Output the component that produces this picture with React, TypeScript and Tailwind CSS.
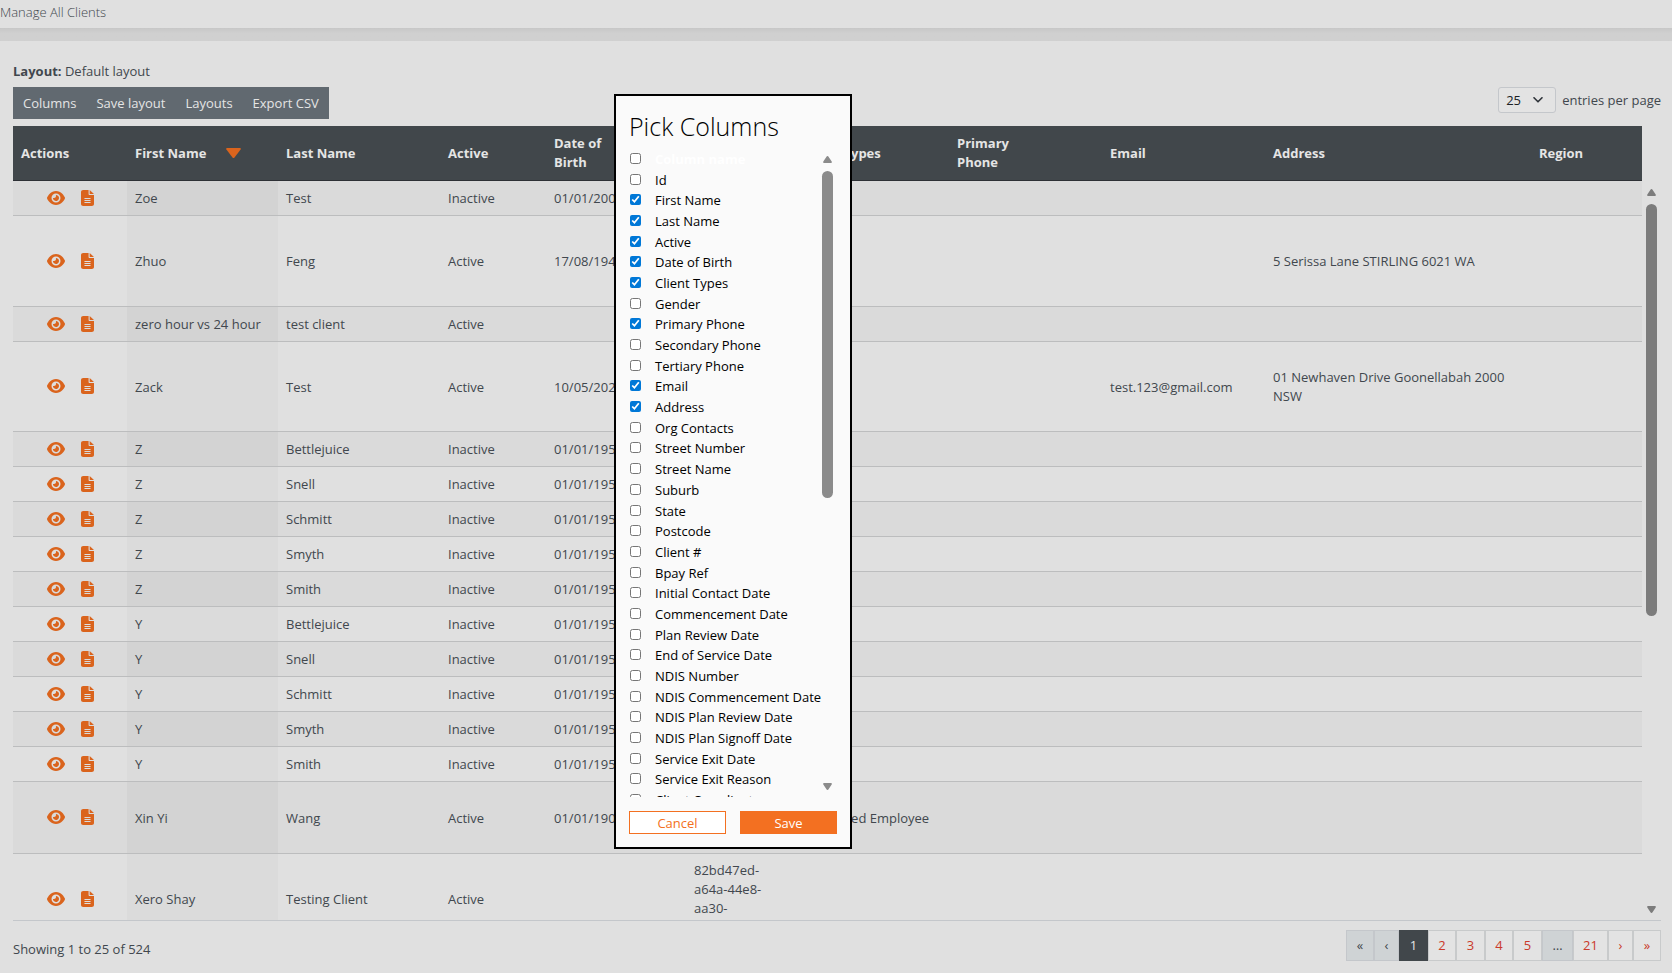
import { FaEye, FaFileLines } from "react-icons/fa6";

const headers = [
  { label: "Actions", width: "w-[114px]" },
  { label: "First Name", width: "w-[151px]", sorted: true },
  { label: "Last Name", width: "w-[162px]" },
  { label: "Active", width: "w-[106px]" },
  { label: "Date of Birth", width: "w-[140px]" },
  { label: "", width: "w-[108px]" },
  { label: "Client Types", width: "w-[155px]" },
  { label: "Primary Phone", width: "w-[153px]" },
  { label: "Email", width: "w-[163px]" },
  { label: "Address", width: "w-[266px]" },
  { label: "Region", width: "" },
];

type Client = {
  first: string;
  last: string;
  active: string;
  dob?: string;
  ref?: string;
  types?: string;
  email?: string;
  address?: string;
  height?: string;
};

const clients: Client[] = [
  { first: "Zoe", last: "Test", active: "Inactive", dob: "01/01/2000" },
  { first: "Zhuo", last: "Feng", active: "Active", dob: "17/08/1949", address: "5 Serissa Lane STIRLING 6021 WA", height: "h-[91px]" },
  { first: "zero hour vs 24 hour", last: "test client", active: "Active" },
  { first: "Zack", last: "Test", active: "Active", dob: "10/05/2020", email: "test.123@gmail.com", address: "01 Newhaven Drive Goonellabah 2000 NSW", height: "h-[90px]" },
  { first: "Z", last: "Bettlejuice", active: "Inactive", dob: "01/01/1950" },
  { first: "Z", last: "Snell", active: "Inactive", dob: "01/01/1950" },
  { first: "Z", last: "Schmitt", active: "Inactive", dob: "01/01/1950" },
  { first: "Z", last: "Smyth", active: "Inactive", dob: "01/01/1950" },
  { first: "Z", last: "Smith", active: "Inactive", dob: "01/01/1950" },
  { first: "Y", last: "Bettlejuice", active: "Inactive", dob: "01/01/1950" },
  { first: "Y", last: "Snell", active: "Inactive", dob: "01/01/1950" },
  { first: "Y", last: "Schmitt", active: "Inactive", dob: "01/01/1950" },
  { first: "Y", last: "Smyth", active: "Inactive", dob: "01/01/1950" },
  { first: "Y", last: "Smith", active: "Inactive", dob: "01/01/1950" },
  { first: "Xin Yi", last: "Wang", active: "Active", dob: "01/01/1900", types: "Registered Employee", height: "h-[72px]" },
  { first: "Xero Shay", last: "Testing Client", active: "Active", ref: "82bd47ed-a64a-44e8-aa30-", height: "h-[91px]" },
];

const columns = [
  "Id", "First Name", "Last Name", "Active", "Date of Birth", "Client Types", "Gender",
  "Primary Phone", "Secondary Phone", "Tertiary Phone", "Email", "Address", "Org Contacts",
  "Street Number", "Street Name", "Suburb", "State", "Postcode", "Client #", "Bpay Ref",
  "Initial Contact Date", "Commencement Date", "Plan Review Date", "End of Service Date",
  "NDIS Number", "NDIS Commencement Date", "NDIS Plan Review Date", "NDIS Plan Signoff Date",
  "Service Exit Date", "Service Exit Reason", "Client Coordinator",
];

const picked = ["First Name", "Last Name", "Active", "Date of Birth", "Client Types", "Primary Phone", "Email", "Address"];

const pages = [
  { label: "«", width: "w-7", state: "off" },
  { label: "‹", width: "w-[25px]", state: "off" },
  { label: "1", width: "w-[29px]", state: "current" },
  { label: "2", width: "w-7", state: "link" },
  { label: "3", width: "w-[29px]", state: "link" },
  { label: "4", width: "w-7", state: "link" },
  { label: "5", width: "w-[29px]", state: "link" },
  { label: "…", width: "w-[31px]", state: "off" },
  { label: "21", width: "w-[35px]", state: "link" },
  { label: "›", width: "w-[25px]", state: "link" },
  { label: "»", width: "w-7", state: "link" },
];

const pageStyles: Record<string, string> = {
  off: "border-[#dbdee2] bg-[#e7ebee] text-[#495057]",
  current: "border-[#495054] bg-[#495054] text-white",
  link: "border-[#dfe1e3] bg-[#fdfdfd] text-[#e2422f]",
};

function Arrow({ down }: { down?: boolean }) {
  return (
    <svg viewBox="0 0 9 7" className={down ? "h-[7px] w-[9px] rotate-180" : "h-[7px] w-[9px]"} fill="#8b8b8b">
      <path d="M4.5 0 Q5.2 0 5.7 .9 L8.7 5.6 Q9.3 7 8 7 H1 Q-.3 7 .3 5.6 L3.3 .9 Q3.8 0 4.5 0Z" />
    </svg>
  );
}

function ScrollBar({ thumb, className }: { thumb: string; className: string }) {
  return (
    <div className={`flex w-[19px] shrink-0 flex-col items-center pt-2 pb-[7px] ${className}`}>
      <Arrow />
      <div className={`mt-2 w-[11px] rounded-full bg-[#8b8b8b] ${thumb}`} />
      <div className="flex-1" />
      <Arrow down />
    </div>
  );
}

function ClientsTable() {
  return (
    <div className="flex min-h-0 flex-1 border-b border-[#dbdee2]">
      <div className="min-w-0 flex-1 overflow-hidden">
        <table className="w-full table-fixed border-collapse text-left">
          <thead>
            <tr className="h-[54px] border-b border-[#33363c] bg-[#495054] text-white">
              {headers.map((h, i) => (
                <th key={i} className={`px-2 pt-px font-bold ${h.width}`}>
                  {h.sorted ? (
                    <span className="flex items-center gap-5">
                      {h.label}
                      <svg viewBox="0 0 15 10" className="h-[10px] w-[15px]" fill="#f37021">
                        <path d="M1.2 0H13.8Q15.4.2 14.6 1.6L8.5 9.4Q7.5 10.4 6.5 9.4L.4 1.6Q-.4.2 1.2 0Z" />
                      </svg>
                    </span>
                  ) : (
                    <span className={h.label.includes("of") || h.label.includes("Phone") ? "block w-16" : ""}>{h.label}</span>
                  )}
                </th>
              ))}
            </tr>
          </thead>
          <tbody>
            {clients.map((c, i) => (
              <tr key={i} className={`border-b border-[#d2d3d4] odd:bg-[#f3f3f3] ${c.height ?? "h-[35px]"}`}>
                <td>
                  <div className="flex items-center gap-4 pl-[34px] text-[#f37021]">
                    <button type="button" aria-label="View client">
                      <FaEye className="h-4 w-[18px]" />
                    </button>
                    <button type="button" aria-label="Client notes">
                      <FaFileLines className="h-4 w-[13px]" preserveAspectRatio="none" />
                    </button>
                  </div>
                </td>
                <td className={i % 2 ? "bg-[#f4f4f4] px-2 pt-[2px]" : "bg-[#ebebeb] px-2 pt-[2px]"}>{c.first}</td>
                <td className="px-2 pt-[2px]">{c.last}</td>
                <td className="px-2 pt-[2px]">{c.active}</td>
                <td className="px-2 pt-[2px]">{c.dob}</td>
                <td className="px-2">
                  {c.ref && <span className="block h-[76px]">{c.ref}</span>}
                </td>
                <td className="px-2 pt-[2px] whitespace-nowrap">{c.types}</td>
                <td></td>
                <td className="px-2 pt-[2px]">{c.email}</td>
                <td className="px-2 pt-[2px]">{c.address}</td>
                <td></td>
              </tr>
            ))}
          </tbody>
        </table>
      </div>
      <ScrollBar className="mt-[55px]" thumb="h-[412px]" />
    </div>
  );
}

function PickColumns() {
  return (
    <div role="dialog" aria-labelledby="pick-title" className="fixed top-[94px] left-[614px] flex w-[238px] flex-col border-2 border-black bg-[#fafafa] p-[13px] text-black">
      <h2 id="pick-title" className="mb-1 h-[35px] text-[25px] leading-[35px] font-light">
        Pick Columns
      </h2>
      <div className="flex h-[649px] overflow-hidden">
        <div className="grid h-[662px] min-w-0 flex-1 auto-rows-fr">
          <label className="flex items-center gap-[14px] font-bold whitespace-nowrap text-white">
            <input type="checkbox" className="ml-px size-[11px]" />
            <span className="pt-[2px]">Column name</span>
          </label>
          {columns.map((name) => (
            <label key={name} className="flex items-center gap-[14px] whitespace-nowrap">
              <input type="checkbox" defaultChecked={picked.includes(name)} className="ml-px size-[11px] accent-[#0078d7]" />
              <span className="pt-[2px]">{name}</span>
            </label>
          ))}
        </div>
        <ScrollBar className="" thumb="h-[327px]" />
      </div>
      <div className="mt-[14px] grid grid-cols-2 gap-[14px]">
        <button type="button" className="h-[23px] border border-[#f37021] bg-white pt-px text-[#f37021]">
          Cancel
        </button>
        <button type="button" className="h-[23px] bg-[#f37021] pt-px text-white">
          Save
        </button>
      </div>
    </div>
  );
}

export default function App() {
  return (
    <div className="flex h-screen flex-col bg-[#fafafa] font-['Open_Sans',sans-serif] text-[13px] leading-[19px] text-[#495057]">
      <header className="h-7 pt-[3px] font-light">Manage All Clients</header>
      <div className="h-[13px] shrink-0 bg-linear-to-b from-[#dedede] to-[#e8e8e8] to-40%" />

      <main className="flex min-h-0 flex-1 flex-col pt-[21px] pr-[11px] pl-[13px]">
        <p>
          <b>Layout:</b> Default layout
        </p>
        <div className="mt-[6px] flex items-start justify-between">
          <div className="flex h-8 bg-[#6c757d] text-white">
            {["Columns", "Save layout", "Layouts", "Export CSV"].map((label) => (
              <button key={label} type="button" className="px-[10px]">
                {label}
              </button>
            ))}
          </div>
          <div className="flex items-center gap-[6px]">
            <span className="relative">
              <select id="page-size" defaultValue="25" className="block h-[26px] w-[58px] appearance-none rounded-[3px] border border-[#dbdee2] bg-[#fdfdfd] pl-[7px] text-[#212529]">
                <option>25</option>
              </select>
              <svg viewBox="0 0 10 6" className="pointer-events-none absolute top-[10px] right-[13px] h-[6px] w-[10px]" fill="none" stroke="#343a40" strokeWidth="1.6">
                <path d="M1 .8 5 4.8 9 .8" strokeLinecap="round" strokeLinejoin="round" />
              </svg>
            </span>
            <label htmlFor="page-size">entries per page</label>
          </div>
        </div>

        <div className="mt-[7px] flex min-h-0 flex-1 flex-col">
          <ClientsTable />
        </div>

        <footer className="flex h-[52px] shrink-0 items-start justify-between pt-[9px]">
          <span className="pt-[10px]">Showing 1 to 25 of 524</span>
          <nav className="flex">
            {pages.map((p) => (
              <button key={p.label} type="button" className={`h-[31px] border ${p.width} ${pageStyles[p.state]}`}>
                {p.label}
              </button>
            ))}
          </nav>
        </footer>
      </main>

      <div className="fixed inset-0 bg-black/10" />
      <PickColumns />
    </div>
  );
}
